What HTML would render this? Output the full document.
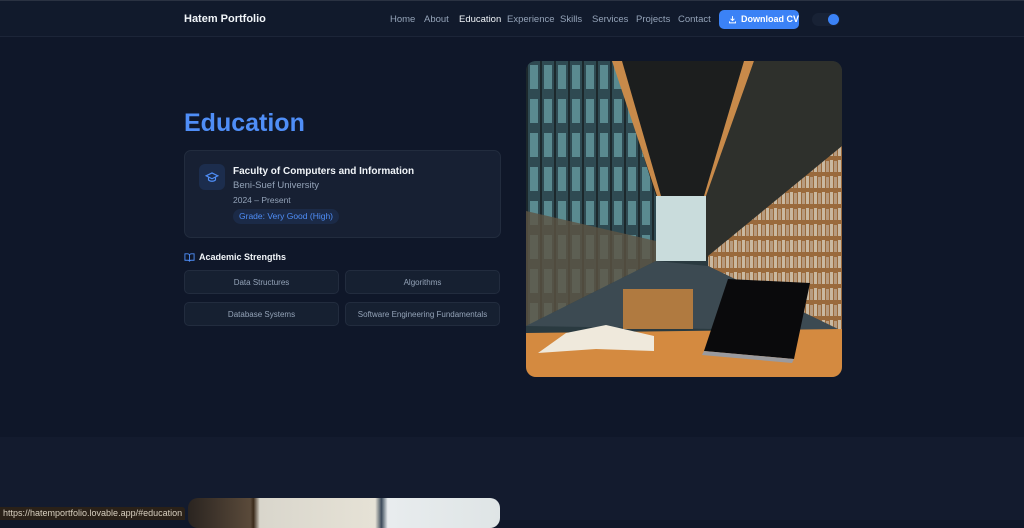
<!DOCTYPE html>
<html><head><meta charset="utf-8"><style>
*{margin:0;padding:0;box-sizing:border-box}
body{width:1024px;height:520px;overflow:hidden;background:#0f1729;font-family:"Liberation Sans",sans-serif;position:relative}
.nav{position:absolute;top:0;left:0;width:1024px;height:37px;background:#111a2c;border-top:1px solid #2a3242;border-bottom:1px solid #1c2538}
.logo{position:absolute;left:184px;top:12px;color:#f1f5f9;font-weight:bold;font-size:11px;white-space:nowrap}
.links{position:absolute;left:390px;top:13px;font-size:9.5px;color:#94a3b8}
.links span{position:absolute;white-space:nowrap}
.btn{position:absolute;left:719px;top:9px;width:80px;height:19px;background:#3b82f6;border-radius:5px;color:#fff;font-size:9px;font-weight:bold;line-height:19px;padding-left:22px;white-space:nowrap}
.tog{position:absolute;left:812px;top:12px;width:28px;height:13px;border-radius:7px;background:#182235}
.tog i{position:absolute;right:1px;top:1px;width:11px;height:11px;border-radius:50%;background:#3b82f6}
h1{position:absolute;left:184px;top:109px;font-size:25px;color:#4f8ef7;font-weight:bold}
.card{position:absolute;left:184px;top:150px;width:317px;height:88px;background:#172033;border:1px solid #222c3e;border-radius:7px}
.ic{position:absolute;left:14px;top:13px;width:26px;height:26px;background:#1c2d4d;border-radius:6px}
.t1{position:absolute;left:48px;top:15px;font-size:10px;color:#f1f5f9;font-weight:bold}
.t2{position:absolute;left:48px;top:29px;font-size:9.5px;color:#94a3b8}
.t3{position:absolute;left:48px;top:44px;font-size:8.5px;color:#94a3b8}
.pill{position:absolute;left:48px;top:58px;height:15px;padding:0 6px;border-radius:8px;background:#1b2a47;color:#4f8ef7;font-size:8.5px;line-height:15px}
.as{position:absolute;top:252px;font-size:9px;color:#f1f5f9;font-weight:bold}
.sk{position:absolute;width:155px;height:24px;background:#162031;border:1px solid #222c3e;border-radius:5px;color:#94a3b8;font-size:8px;text-align:center;line-height:23px}
.img{position:absolute;left:526px;top:61px;width:316px;height:316px;border-radius:10px;overflow:hidden}
.sec2{position:absolute;left:0;top:437px;width:1024px;height:83px;background:#131b2e}
.img2{position:absolute;left:188px;top:498px;width:312px;height:30px;border-radius:10px;overflow:hidden;background:linear-gradient(90deg,#2a2420 0,#5a4a3a 20%,#3a2a1a 21%,#d9d6cc 23%,#e6e2d6 60%,#3c4a5a 62%,#e8ecee 64%,#dfe5e6 100%)}
.status{position:absolute;left:0;top:507px;height:13px;background:#2a2118;color:#d8d0c0;font-size:9px;line-height:13px;padding:0 3px;border-top-right-radius:3px}
</style></head><body>
<div class="nav">
<div class="logo">Hatem Portfolio</div>
<div class="links"><span style="left:0">Home</span><span style="left:34px">About</span><span style="left:69px;color:#f1f5f9">Education</span><span style="left:117px">Experience</span><span style="left:170px">Skills</span><span style="left:202px">Services</span><span style="left:246px">Projects</span><span style="left:288px">Contact</span></div>
<div class="btn"><svg style="position:absolute;left:9px;top:5px" width="9" height="9" viewBox="0 0 24 24" fill="none" stroke="#fff" stroke-width="2.5"><path d="M12 3v12M7 10l5 5 5-5M4 17v4h16v-4"/></svg>Download CV</div>
<div class="tog"><i></i></div>
</div>
<h1>Education</h1>
<div class="card"><div class="ic"><svg style="position:absolute;left:6px;top:6px" width="14" height="14" viewBox="0 0 24 24" fill="none" stroke="#4f8ef7" stroke-width="2"><path d="M2 10l10-5 10 5-10 5z"/><path d="M6 12v5c3 3 9 3 12 0v-5"/></svg></div>
<div class="t1">Faculty of Computers and Information</div>
<div class="t2">Beni-Suef University</div>
<div class="t3">2024 – Present</div>
<div class="pill">Grade: Very Good (High)</div></div>
<svg style="position:absolute;left:184px;top:252px" width="11" height="11" viewBox="0 0 24 24" fill="none" stroke="#4f8ef7" stroke-width="2"><path d="M2 4h6a4 4 0 014 4v13a3 3 0 00-3-3H2zM22 4h-6a4 4 0 00-4 4v13a3 3 0 013-3h7z"/></svg>
<div class="as" style="left:199px">Academic Strengths</div>
<div class="sk" style="left:184px;top:270px">Data Structures</div>
<div class="sk" style="left:345px;top:270px">Algorithms</div>
<div class="sk" style="left:184px;top:302px">Database Systems</div>
<div class="sk" style="left:345px;top:302px">Software Engineering Fundamentals</div>
<div class="img"><svg width="316" height="316" viewBox="0 0 316 316">
<defs>
<pattern id="bk" width="8" height="16" patternUnits="userSpaceOnUse"><rect width="8" height="16" fill="#9a6a3c"/><rect x="0" y="3" width="3" height="12" fill="#c9b8a0"/><rect x="4" y="4" width="3" height="11" fill="#b79c80"/></pattern>
<pattern id="gl" width="14" height="34" patternUnits="userSpaceOnUse"><rect width="14" height="34" fill="#2f4a52"/><rect x="0" width="2" height="34" fill="#1c282c"/><rect x="4" y="4" width="8" height="24" fill="#5a8a90"/></pattern>
</defs>
<rect width="316" height="316" fill="#2a3a40"/>
<polygon points="0,0 88,0 130,135 130,200 0,265" fill="url(#gl)"/>
<polygon points="0,150 130,180 130,200 0,265" fill="#5e5444" opacity=".8"/>
<polygon points="88,0 228,0 180,135 130,135" fill="#1c1e1e"/>
<polygon points="86,0 96,0 135,135 131,135" fill="#c88a4a"/>
<polygon points="218,0 228,0 182,135 178,135" fill="#c88a4a"/>
<rect x="130" y="135" width="50" height="65" fill="#c9dcdc"/>
<polygon points="228,0 316,0 316,100 180,200 180,135" fill="#2e302c"/>
<polygon points="182,195 316,85 316,270 182,205" fill="url(#bk)"/>
<polygon points="0,265 316,270 182,205 130,200" fill="#3c4a52"/>
<rect x="97" y="228" width="70" height="40" fill="#b07a40"/>
<polygon points="0,272 316,268 316,316 0,316" fill="#d48a40"/>
<polygon points="202,218 284,222 268,298 178,290" fill="#0a0a0c"/>
<polygon points="178,290 268,298 266,302 176,294" fill="#9a9a9e"/>
<polygon points="12,292 40,272 80,264 128,275 128,290 70,288" fill="#efe9dc"/>
</svg></div>
<div class="sec2"></div>
<div class="img2"></div>
<div class="status">https://hatemportfolio.lovable.app/#education</div>
</body></html>
